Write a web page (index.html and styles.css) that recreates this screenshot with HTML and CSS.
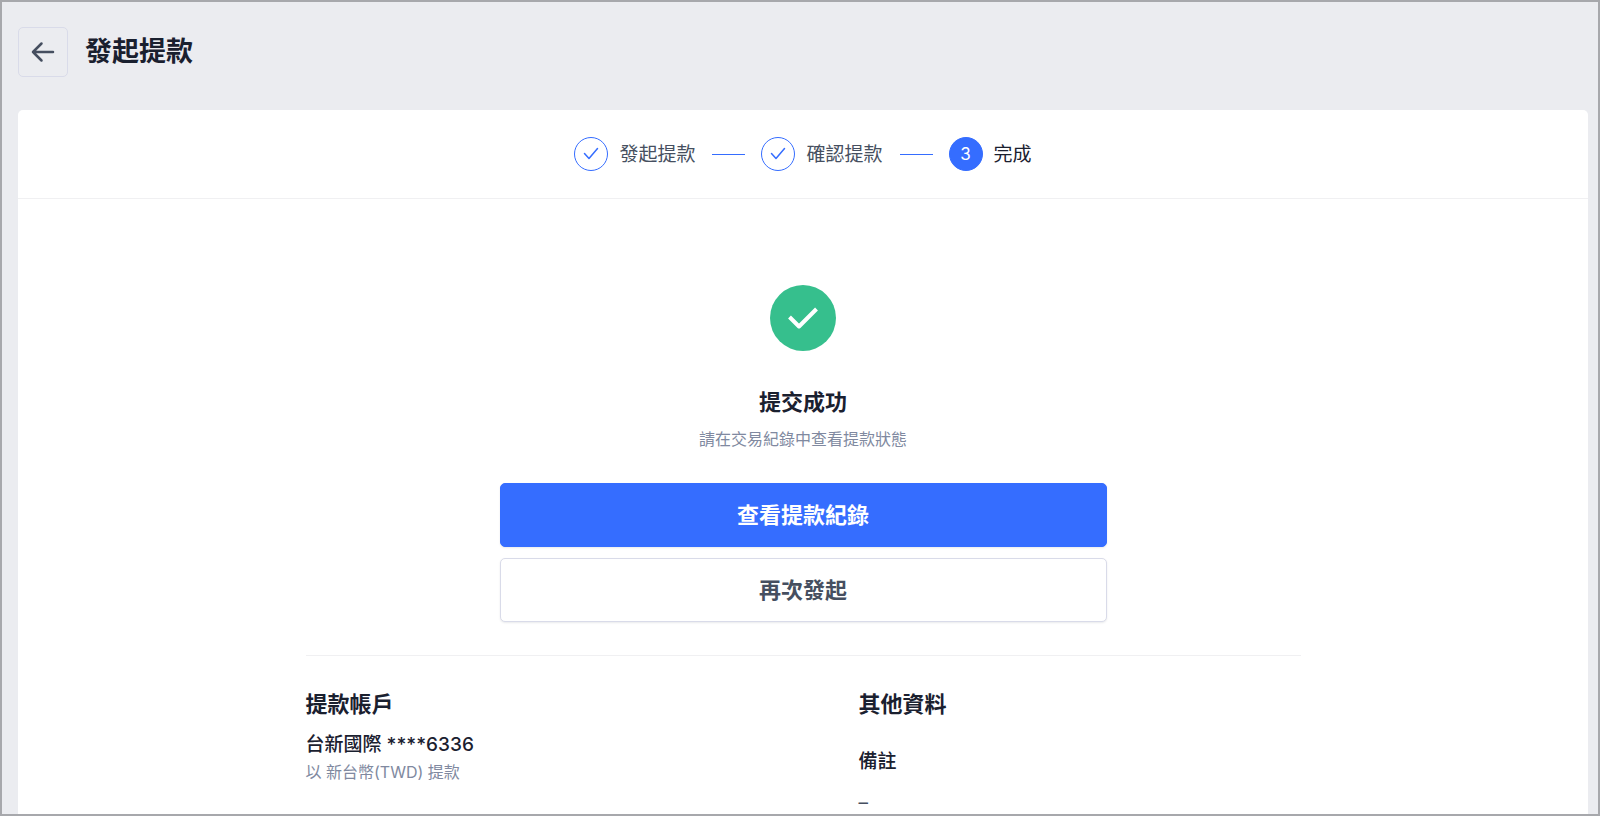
FILE: index.html
```
<!DOCTYPE html>
<html lang="zh-Hant">
<head>
    <meta charset="UTF-8">
    <meta name="viewport" content="width=device-width, initial-scale=1.0">
    <title>發起提款</title>
    <link rel="stylesheet" href="styles.css">
</head>
<body>
    <div class="page">
        <header class="page-header">
            <button class="back" type="button" aria-label="返回">
                <svg width="24" height="24" viewBox="0 0 24 24" fill="none" stroke="currentColor" stroke-width="2.5" stroke-linecap="round" stroke-linejoin="round">
                    <path d="M22 12H2M10.5 3.5L2 12L10.5 20.5"/>
                </svg>
            </button>
            <h1>發起提款</h1>
        </header>

        <main class="card">
            <ol class="steps">
                <li class="step">
                    <span class="step-icon">
                        <svg width="16" height="16" viewBox="0 0 16 16" fill="none" stroke="currentColor" stroke-width="1.5" stroke-linecap="round" stroke-linejoin="round">
                            <path d="M1.5 7.5L6 12.5L14.5 2.5"/>
                        </svg>
                    </span>
                    <span class="step-label">發起提款</span>
                </li>
                <li class="step">
                    <span class="step-icon">
                        <svg width="16" height="16" viewBox="0 0 16 16" fill="none" stroke="currentColor" stroke-width="1.5" stroke-linecap="round" stroke-linejoin="round">
                            <path d="M1.5 7.5L6 12.5L14.5 2.5"/>
                        </svg>
                    </span>
                    <span class="step-label">確認提款</span>
                </li>
                <li class="step current" aria-current="step">
                    <span class="step-icon">3</span>
                    <span class="step-label">完成</span>
                </li>
            </ol>

            <section class="result">
                <div class="result-icon">
                    <svg width="32" height="32" viewBox="0 0 32 32" fill="none" stroke="currentColor" stroke-width="4" stroke-linejoin="round">
                        <path d="M2.5 15L12 24.5L29.5 7"/>
                    </svg>
                </div>
                <h2>提交成功</h2>
                <p class="muted">請在交易紀錄中查看提款狀態</p>
                <div class="actions">
                    <button class="btn btn-primary" type="button">查看提款紀錄</button>
                    <button class="btn" type="button">再次發起</button>
                </div>
            </section>

            <section class="details">
                <div>
                    <h2>提款帳戶</h2>
                    <p class="account">台新國際 ****6336</p>
                    <p class="muted">以 新台幣(TWD) 提款</p>
                </div>
                <div>
                    <h2>其他資料</h2>
                    <h3>備註</h3>
                    <p class="note">–</p>
                </div>
            </section>
        </main>
    </div>
</body>
</html>
```
FILE: styles.css
```
* {
    box-sizing: border-box;
}
body {
    margin: 0;
    font-family: Inter, "Noto Sans CJK TC", sans-serif;
    font-size: 19px;
    line-height: 28px;
    color: #1a202f;
}
h1, h2, h3, p, ol {
    margin: 0;
    padding: 0;
}
button {
    font-family: inherit;
    cursor: pointer;
}
svg {
    display: block;
}
.page {
    display: flex;
    flex-direction: column;
    height: 100vh;
    padding: 25px 10px 0 16px;
    overflow: hidden;
    background-color: #ebecf0;
    border: 2px solid #a7a8ac;
}
.page-header {
    display: flex;
    align-items: center;
    gap: 17px;
    margin-bottom: 33px;
}
.back {
    display: flex;
    align-items: center;
    justify-content: center;
    width: 50px;
    height: 50px;
    padding: 0;
    color: #464f60;
    background: none;
    border: 1px solid #d9dbe9;
    border-radius: 5px;
}
h1 {
    font-size: 27px;
    line-height: 36px;
    font-weight: 700;
}
h2 {
    font-size: 22px;
    line-height: 32px;
    font-weight: 700;
}
h3 {
    font-size: 19px;
    font-weight: 500;
}
.card {
    flex: 1 0 auto;
    background-color: #fff;
    border-radius: 5px 5px 0 0;
}
.steps {
    display: flex;
    align-items: center;
    justify-content: center;
    height: 89px;
    list-style: none;
    border-bottom: 1px solid #f0f0f2;
}
.step {
    display: flex;
    align-items: center;
    gap: 11px;
    color: #464f60;
}
.step + .step::before {
    content: "";
    width: 33px;
    height: 1px;
    margin: 0 5px 0 17px;
    background-color: #356dff;
}
.step.current {
    color: #1a202f;
}
.step-label {
    padding-top: 2px;
}
.step-icon {
    display: flex;
    align-items: center;
    justify-content: center;
    width: 34px;
    height: 34px;
    color: #356dff;
    border: 1px solid #356dff;
    border-radius: 50%;
}
.current .step-icon {
    font-size: 17px;
    color: #fff;
    background-color: #356dff;
}
.result {
    display: flex;
    flex-direction: column;
    align-items: center;
    padding-top: 86px;
}
.result-icon {
    display: flex;
    align-items: center;
    justify-content: center;
    width: 66px;
    height: 66px;
    margin-bottom: 35px;
    color: #fff;
    background-color: #36bf8d;
    border-radius: 50%;
}
.muted {
    font-size: 16px;
    line-height: 26px;
    color: #8089a0;
}
.result .muted {
    margin-top: 8px;
}
.actions {
    display: flex;
    flex-direction: column;
    gap: 11px;
    width: 100%;
    max-width: 607px;
    margin-top: 31px;
}
.btn {
    height: 64px;
    padding: 0 16px 4px;
    font-size: 22px;
    font-weight: 700;
    color: #464f60;
    background-color: #fff;
    border: 1px solid #d9dbe9;
    border-radius: 5px;
    box-shadow: 0 1px 2px rgba(70, 79, 96, 0.12);
}
.btn-primary {
    color: #fff;
    background-color: #356dff;
    border-color: #356dff;
}
.details {
    display: grid;
    grid-template-columns: 1fr 1fr;
    column-gap: 111px;
    max-width: 995px;
    margin: 33px auto 0;
    padding-top: 32px;
    border-top: 1px solid #f0f0f2;
}
.account {
    margin-top: 11px;
    font-weight: 500;
}
.details h3 {
    margin-top: 28px;
}
.note {
    margin-top: 13px;
    color: #464f60;
}
```
